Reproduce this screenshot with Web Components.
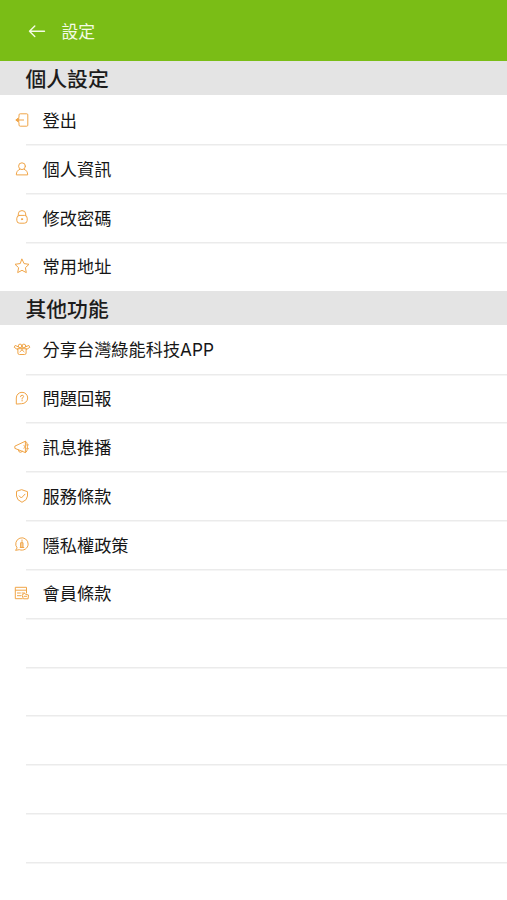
<!DOCTYPE html>
<html lang="zh-Hant">
<head>
<meta charset="utf-8">
<meta name="viewport" content="width=device-width, initial-scale=1">
<title>設定</title>
<style>
  body {
    margin: 0;
    background: #fff;
    color: #1c1c1c;
    font-family: "Noto Sans CJK TC", sans-serif;
    --brand: #7abd16;
    --accent: #f0a548;
    --band: #e4e4e4;
    --line: #ebebeb;
    --row: 48.84px;
  }
</style>
</head>
<body>
<settings-page>
  <app-header>設定</app-header>

  <settings-group label="個人設定">
    <settings-row icon="logout" first>登出</settings-row>
    <settings-row icon="user">個人資訊</settings-row>
    <settings-row icon="lock">修改密碼</settings-row>
    <settings-row icon="star">常用地址</settings-row>
  </settings-group>

  <settings-group label="其他功能">
    <settings-row icon="gift" first>分享台灣綠能科技APP</settings-row>
    <settings-row icon="help">問題回報</settings-row>
    <settings-row icon="horn">訊息推播</settings-row>
    <settings-row icon="shield">服務條款</settings-row>
    <settings-row icon="privacy">隱私權政策</settings-row>
    <settings-row icon="terms">會員條款</settings-row>
    <settings-row></settings-row>
    <settings-row></settings-row>
    <settings-row></settings-row>
    <settings-row></settings-row>
    <settings-row></settings-row>
    <settings-row></settings-row>
  </settings-group>
</settings-page>

<script>
(function () {
  /* ---- 16x16 line icons ---- */
  const ICONS = {
    logout: `
      <path d="M5 5.200V3q0-1.200 1.200-1.200h6.600q1 0 1 1v10.400q0 1-1 1H6.200Q5 14.200 5 13v-2.200"/>
      <path d="M9.600 8H2.400"/>
      <path d="M4.400 6L1.800 8l2.600 2z" fill="currentColor"/>`,
    user: `
      <circle cx="8" cy="5.200" r="3.400"/>
      <path d="M5.800 8.300C3.500 9.200 2.400 10.900 2.300 13.900h11.400c-.1-3-1.200-4.700-3.500-5.600"/>`,
    lock: `
      <rect x="2.800" y="6.400" width="10.400" height="7.800" rx="2.800"/>
      <path d="M4.300 6.600V4.900a3.700 3.300 0 0 1 7.400 0v1.700"/>
      <circle cx="8" cy="10.200" r=".6" fill="currentColor"/>`,
    star: `
      <path d="M8 1.200l2.100 4.400 4.900.7-3.600 3.400.9 4.900L8 12.300l-4.300 2.300.9-4.900L1 6.300l4.900-.7z"/>`,
    gift: `
      <path d="M4.400 5.900L1.200 4.400.2 6.300l3.500 2.400M11.600 5.900l3.200-1.500 1 1.900-3.500 2.400"/>
      <path d="M3.600 7.700h8.800M3.900 8v4q0 1.500 1.500 1.500h5.200q1.500 0 1.500-1.500V8"/>
      <circle cx="6.100" cy="4.900" r="1.800"/>
      <circle cx="9.900" cy="4.900" r="1.800"/>
      <path d="M8 6v2.800M5.900 10.800L8 8.800l2.100 2"/>`,
    help: `
      <path d="M2.300 13.700V8A5.700 5.700 0 1 1 8 13.700z"/>
      <path d="M6.500 6.700q.1-1.500 1.600-1.500 1.500.1 1.500 1.400 0 .9-1.500 1.600v.9M8.100 10.400v.6"/>`,
    horn: `
      <path d="M1.200 7L11.400 2.200v11.400L1.200 9.500z"/>
      <path d="M4.300 10.900q.2 2.700 2.500 2.400 1.200-.2 1.400-1.200M11.400 2.300q2 .2 2 5.600t-2 5.600"/>
      <path d="M10 6.200q1.700 1.600 0 3.300M12.600 5.900h2M12.600 9.700h2" stroke-width=".8"/>`,
    shield: `
      <path d="M8 1.800l5.500 1.900V8q0 4-5.500 6.300Q2.500 12 2.500 8V3.700z"/>
      <path d="M5.200 7.900l2.100 2.100 3.700-3.800"/>`,
    privacy: `
      <path d="M1.800 14l1.300-2.100A6.200 6.200 0 1 1 5.700 13.800z"/>
      <path d="M8 3.900v1.600M7 6.700h2v4.700H7zM6.200 11.500h3.600M8 7v4"/>`,
    terms: `
      <path d="M12.500 8V2.300H1.300v11.400h7M1.500 5.200h11M3.400 8h3M8 8h2.400M3.400 10.700h3.500"/>
      <path d="M8.300 9.900l2-1.500 1.800 1 2.400.6-.4 3.800H9.800zM10 11.300h2.600"/>`
  };

  function attach(el, html) {
    const template = document.createElement('template');
    template.innerHTML = html;
    const root = el.attachShadow({ mode: 'open' });
    root.appendChild(template.content.cloneNode(true));
    return root;
  }

  class SettingsPage extends HTMLElement {
    constructor() {
      super();
      attach(this, `
        <style>
          :host { display: flex; flex-direction: column; height: 100vh; overflow: hidden; background: #fff; }
        </style>
        <slot></slot>
      `);
    }
  }

  class AppHeader extends HTMLElement {
    constructor() {
      super();
      attach(this, `
        <style>
          :host {
            display: flex;
            align-items: center;
            flex: none;
            gap: 15.500px;
            height: 61.400px;
            padding-left: 28px;
            box-sizing: border-box;
            background: var(--brand);
            color: #f4fbe6;
          }
          svg { width: 18px; height: 18px; display: block; }
          h1 { margin: 0; font-size: 16.800px; font-weight: 400; line-height: 24px; }
        </style>
        <svg viewBox="0 0 18 18" fill="none" stroke="currentColor" stroke-width="1.400" stroke-linecap="round" stroke-linejoin="round">
          <path d="M16.500 9.300H1.500M6.800 4L1.500 9.300l5.300 5.300"/>
        </svg>
        <h1><slot></slot></h1>
      `);
    }
  }

  class SettingsGroup extends HTMLElement {
    constructor() {
      super();
      this._root = attach(this, `
        <style>
          :host { display: block; flex: none; }
          h2 {
            margin: 0;
            height: 34px;
            padding-left: 25.500px;
            background: var(--band);
            font-size: 20.800px;
            font-weight: 500;
            line-height: 35px;
          }
        </style>
        <h2></h2>
        <slot></slot>
      `);
    }

    connectedCallback() {
      this._root.querySelector('h2').textContent = this.getAttribute('label') || '';
    }
  }

  class SettingsRow extends HTMLElement {
    constructor() {
      super();
      this._root = attach(this, `
        <style>
          :host {
            display: flex;
            align-items: center;
            gap: 13px;
            height: var(--row);
            padding-left: 13.600px;
            box-sizing: border-box;
            color: #161616;
            font-family: Inter, "Noto Sans CJK TC", sans-serif;
            font-size: 17.200px;
            line-height: 24px;
            /* separator sits on the top edge, inset to the label band */
            background: linear-gradient(var(--line), var(--line)) 26px 0 / 100% 1.500px no-repeat;
          }
          :host([first]) { background: none; }
          .icon { width: 16px; height: 16px; color: var(--accent); }
          .label { padding-top: 2.400px; }
          svg { width: 16px; height: 16px; display: block; overflow: visible; }
        </style>
        <span class="icon"></span>
        <span class="label"><slot></slot></span>
      `);
    }

    connectedCallback() {
      const icon = ICONS[this.getAttribute('icon')];
      if (!icon) return;
      this._root.querySelector('.icon').innerHTML =
        `<svg viewBox="0 0 16 16" fill="none" stroke="currentColor" stroke-width="1" stroke-linecap="round" stroke-linejoin="round">${icon}</svg>`;
    }
  }

  customElements.define('settings-page', SettingsPage);
  customElements.define('app-header', AppHeader);
  customElements.define('settings-group', SettingsGroup);
  customElements.define('settings-row', SettingsRow);
})();
</script>
</body>
</html>
